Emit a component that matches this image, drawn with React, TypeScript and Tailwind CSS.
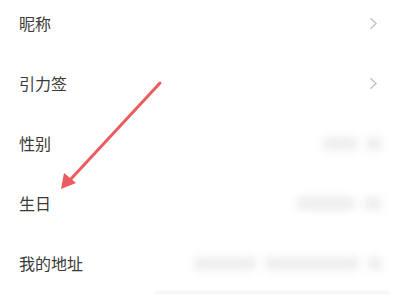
const rows = [
  { label: "昵称", chevron: true, blobs: [] as string[] },
  { label: "引力签", chevron: true, blobs: [] as string[] },
  { label: "性别", chevron: false, blobs: ["w-[34px]", "w-[16px]"] },
  { label: "生日", chevron: false, blobs: ["w-[58px]", "w-[18px]"] },
  { label: "我的地址", chevron: false, blobs: ["w-[62px]", "w-[94px]", "w-[14px]"] },
];

function Chevron() {
  return (
    <svg width="9" height="13" viewBox="0 0 9 13" fill="none">
      <path d="M1.5 1.2 L7 6.5 L1.5 11.8" stroke="#c2c2c2" strokeWidth="1.4" />
    </svg>
  );
}

export default function App() {
  return (
    <div
      className="relative w-[400px] h-[300px] overflow-hidden bg-white"
      style={{ fontFamily: '"Noto Sans CJK SC", "Noto Sans", sans-serif' }}
    >
      <div className="-mt-[7px] flex flex-col">
        {rows.map((row) => (
          <div key={row.label} className="flex h-[60px] items-center justify-between pl-[19px] pr-[22px]">
            <span className="text-[16px] text-[#3a3a3a]">{row.label}</span>
            {row.chevron ? (
              <Chevron />
            ) : (
              <div className="mr-[-4px] flex items-center gap-[9px] blur-[4px]">
                {row.blobs.map((w, i) => (
                  <div key={i} className={`${w} h-[13px] rounded bg-[#ededed]`} />
                ))}
              </div>
            )}
          </div>
        ))}
      </div>
      <div className="absolute left-[155px] right-[10px] top-[291px] h-[3px] bg-[#f4f4f4] blur-[1px]" />
      <svg className="absolute left-0 top-0" width="400" height="300">
        <line x1="160" y1="83" x2="70" y2="180" stroke="#ea5c5d" strokeWidth="3" strokeLinecap="round" />
        <polygon points="61,189 64,173 76,183" fill="#ea5c5d" />
      </svg>
    </div>
  );
}
